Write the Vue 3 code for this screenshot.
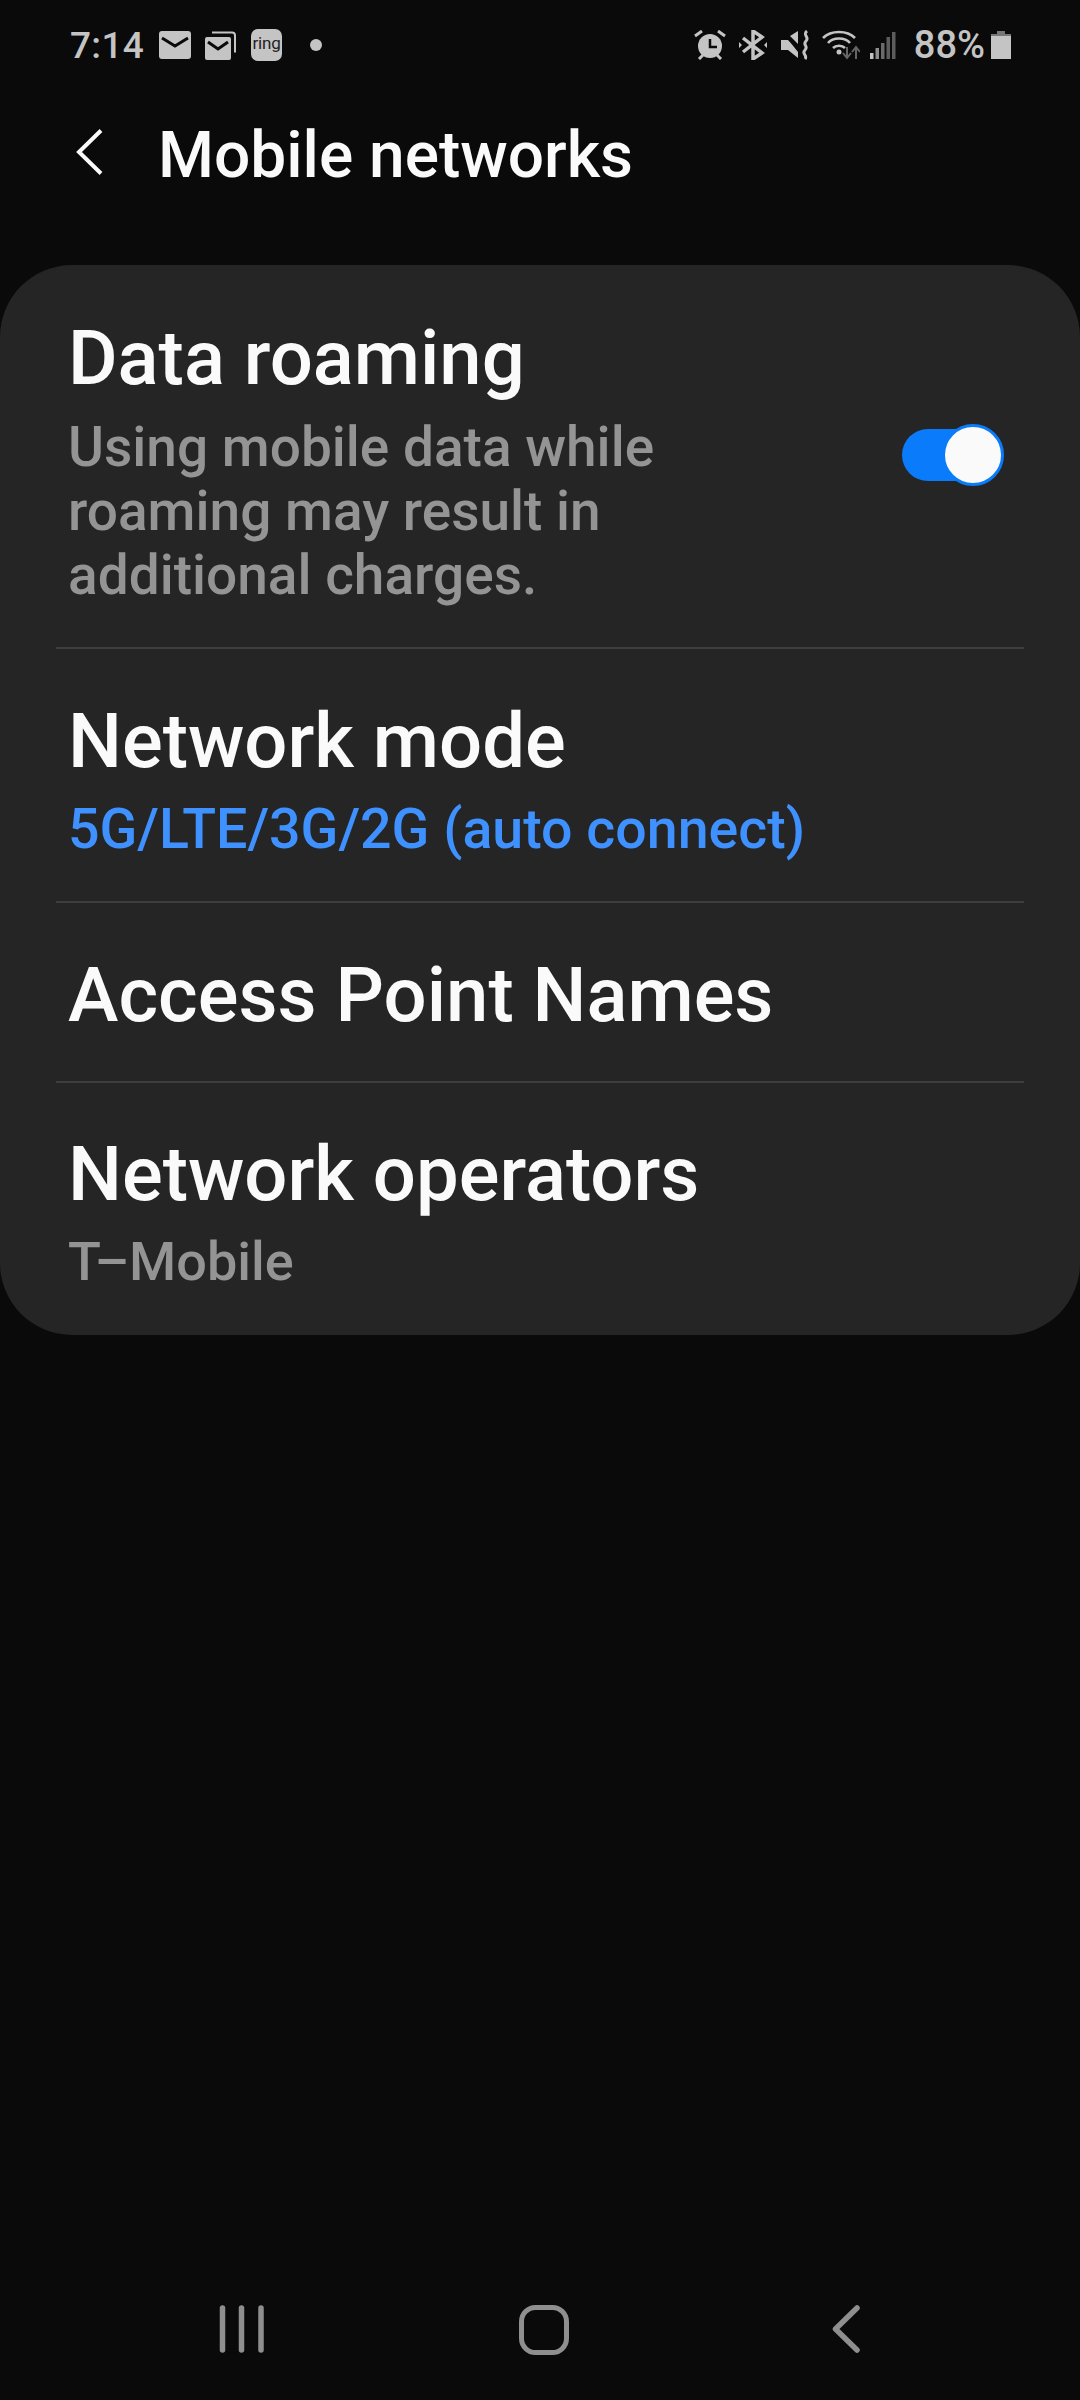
<template>
  <div class="screen">
    <div class="status">
      <div class="status-left">
        <span class="time">7:14</span>
        <svg class="i-mail" width="32" height="28" viewBox="0 0 32 28"><rect width="32" height="28" rx="3" fill="#c4c4c4"/><path d="M3 7l13 8 13-8" fill="none" stroke="#0a0a0a" stroke-width="3"/></svg>
        <svg class="i-mails" width="32" height="29" viewBox="0 0 32 29"><path d="M7 1.500h20a3 3 0 0 1 3 3v17" fill="none" stroke="#c4c4c4" stroke-width="2"/><rect y="6" width="26" height="23" rx="2" fill="#c4c4c4"/><path d="M3 11l10 7 10-7" fill="none" stroke="#0a0a0a" stroke-width="3"/></svg>
        <span class="ring">ring</span>
        <span class="dot"></span>
      </div>
      <div class="status-right">
        <svg width="32" height="30" viewBox="0 0 32 30"><circle cx="16" cy="16" r="12" fill="#c4c4c4"/><path d="M16 9v8h7" fill="none" stroke="#0a0a0a" stroke-width="2.500"/><path d="M1 6l7-5M31 6l-7-5M5 29l4-4M27 29l-4-4" stroke="#c4c4c4" stroke-width="3" fill="none"/></svg>
        <svg class="gap-bt" width="28" height="30" viewBox="0 0 28 30"><path d="M4 8l19 15-9 6V1l9 6L4 22" fill="none" stroke="#c4c4c4" stroke-width="3.500"/><path d="M0 12v6l3-3zM28 12v6l-3-3z" fill="#c4c4c4"/></svg>
        <svg class="gap-mute" width="30" height="30" viewBox="0 0 30 30"><path d="M0 10h7L17 19v9L7 20H0zM9 6l8-5v13z" fill="#c4c4c4"/><path d="M2 1l17 21" stroke="#0a0a0a" stroke-width="3"/><path d="M26 1c-5 4 3 6-1 10s3 5-1 9 3 5 0 9" fill="none" stroke="#c4c4c4" stroke-width="3"/></svg>
        <svg class="gap-wifi" width="38" height="30" viewBox="0 0 38 30"><path d="M1 8c8-8 24-8 32 0M6 13c5-6 17-6 22 0M11 18c3-3 9-3 12 0" fill="none" stroke="#c4c4c4" stroke-width="2.600"/><circle cx="17" cy="22" r="2.500" fill="#c4c4c4"/><path d="M25 17v10M21 23l4 5 4-5" stroke="#666" stroke-width="2" fill="none"/><path d="M34 29V18M30 22l4-5 4 5" stroke="#666" stroke-width="2" fill="none"/></svg>
        <svg class="gap-sig" width="26" height="28" viewBox="0 0 26 28"><rect x="0" y="22" width="3.500" height="6" fill="#c4c4c4"/><rect x="5.500" y="17" width="3.500" height="11" fill="#8f8f8f"/><rect x="11" y="12" width="3.500" height="16" fill="#6a6a6a"/><rect x="16.500" y="6" width="3.500" height="22" fill="#5c5c5c"/><rect x="22" y="1" width="3.500" height="27" fill="#5c5c5c"/></svg>
        <span class="batt-text">88%</span>
        <svg class="gap-batt" width="20" height="28" viewBox="0 0 20 28"><path d="M6 0h8v3h6v25H0V3h6z" fill="#c4c4c4"/><path d="M0 3h20v2H0zM6 0h8v3H6z" fill="#777"/></svg>
      </div>
    </div>

    <header class="bar">
      <svg class="back" width="28" height="46" viewBox="0 0 28 46"><path d="M25 1.500L3 23l22 21.500" fill="none" stroke="#fafafa" stroke-width="4"/></svg>
      <h1 class="heading">Mobile networks</h1>
    </header>

    <section class="card">
      <div class="row row-roam">
        <div class="row-text">
          <div class="title">Data roaming</div>
          <div class="sub muted">Using mobile data while<br>roaming may result in<br>additional charges.</div>
        </div>
        <span class="switch"><span class="knob"></span></span>
      </div>
      <div class="row row-mode">
        <div class="title">Network mode</div>
        <div class="sub blue">5G/LTE/3G/2G (auto connect)</div>
      </div>
      <div class="row row-apn">
        <div class="title">Access Point Names</div>
      </div>
      <div class="row row-op">
        <div class="title">Network operators</div>
        <div class="sub muted">T–Mobile</div>
      </div>
    </section>

    <nav class="nav">
      <svg width="46" height="48" viewBox="0 0 46 48"><path d="M3.500 3v42M22.500 3v42M42 3v42" stroke="#8f8f8f" stroke-width="5.500" stroke-linecap="round"/></svg>
      <svg class="nav-home" width="50" height="50" viewBox="0 0 50 50"><rect x="2.500" y="2.500" width="45" height="45" rx="14" fill="none" stroke="#8f8f8f" stroke-width="5"/></svg>
      <svg class="nav-back" width="28" height="48" viewBox="0 0 28 48"><path d="M25 3L3.500 24 25 45" fill="none" stroke="#8f8f8f" stroke-width="5.500" stroke-linecap="round" stroke-linejoin="round"/></svg>
    </nav>
  </div>
</template>

<script setup>
</script>

<style>
html, body { margin: 0; background: #0a0a0a; }
</style>

<style scoped>
.screen {
  width: 1080px;
  height: 2400px;
  background: #0a0a0a;
  display: flex;
  flex-direction: column;
  font-family: Roboto, "Liberation Sans", sans-serif;
  overflow: hidden;
}
.status {
  height: 90px;
  padding: 0 69px 0 70px;
  display: flex;
  justify-content: space-between;
  align-items: center;
  color: #c4c4c4;
}
.status-left, .status-right { display: flex; align-items: center; }
.time { font-size: 37px; font-weight: 500; margin-right: 15px; letter-spacing: 0.3px; }
.i-mails { margin-left: 14px; }
.ring {
  margin-left: 14px;
  width: 31px;
  height: 32px;
  border-radius: 7px;
  background: #c4c4c4;
  color: #222;
  font-size: 17px;
  letter-spacing: -0.2px;
  line-height: 29px;
  text-align: center;
  overflow: hidden;
}
.dot { margin-left: 28px; width: 12px; height: 12px; border-radius: 50%; background: #c4c4c4; }
.gap-bt { margin-left: 13px; }
.gap-mute { margin-left: 14px; }
.gap-wifi { margin-left: 11px; }
.gap-sig { margin-left: 10px; }
.batt-text { margin-left: 18px; font-size: 38px; font-weight: 500; }
.gap-batt { margin-left: 6px; }

.bar {
  height: 175px;
  padding-left: 76px;
  display: flex;
  align-items: flex-start;
  box-sizing: border-box;
  padding-top: 39px;
}
.heading {
  margin: -10px 0 0 54px;
  font-size: 64px;
  line-height: 74px;
  font-weight: 500;
  color: #fafafa;
}
.card {
  background: #252525;
  border-radius: 72px;
  height: 1070px;
  box-sizing: border-box;
}
.row {
  margin: 0 56px;
  padding: 0 12px;
  border-bottom: 2px solid #3e3e3e;
  box-sizing: border-box;
}
.row:last-child { border-bottom: 0; }
.row-roam { height: 384px; padding-top: 49px; display: flex; justify-content: space-between; }
.row-mode { height: 254px; padding-top: 48px; }
.row-apn { height: 180px; padding-top: 48px; }
.row-op { height: 250px; padding-top: 47px; }
.title { font-size: 76px; line-height: 88px; font-weight: 500; color: #fafafa; }
.sub { font-size: 55.500px; line-height: 64px; font-weight: 500; margin-top: 13px; }
.row-op .sub { margin-top: 12px; font-size: 54px; }
.row-roam .sub { font-size: 55px; }
.muted { color: #949494; }
.blue { color: #3e91ff; }
.switch {
  position: relative;
  flex: none;
  margin: 115px 13px 0 0;
  width: 97px;
  height: 52px;
  border-radius: 26px;
  background: #0a7cfb;
}
.knob {
  position: absolute;
  right: -5px;
  top: -5px;
  width: 56px;
  height: 56px;
  border-radius: 50%;
  background: #fafafa;
  border: 3px solid #0a7cfb;
}
.nav {
  margin-top: auto;
  height: 95px;
  padding-left: 219px;
  display: flex;
  align-items: flex-start;
  box-sizing: border-box;
}
.nav svg { flex: none; }
.nav-home { margin-left: 254px; }
.nav-back { margin-left: 263px; }
</style>
